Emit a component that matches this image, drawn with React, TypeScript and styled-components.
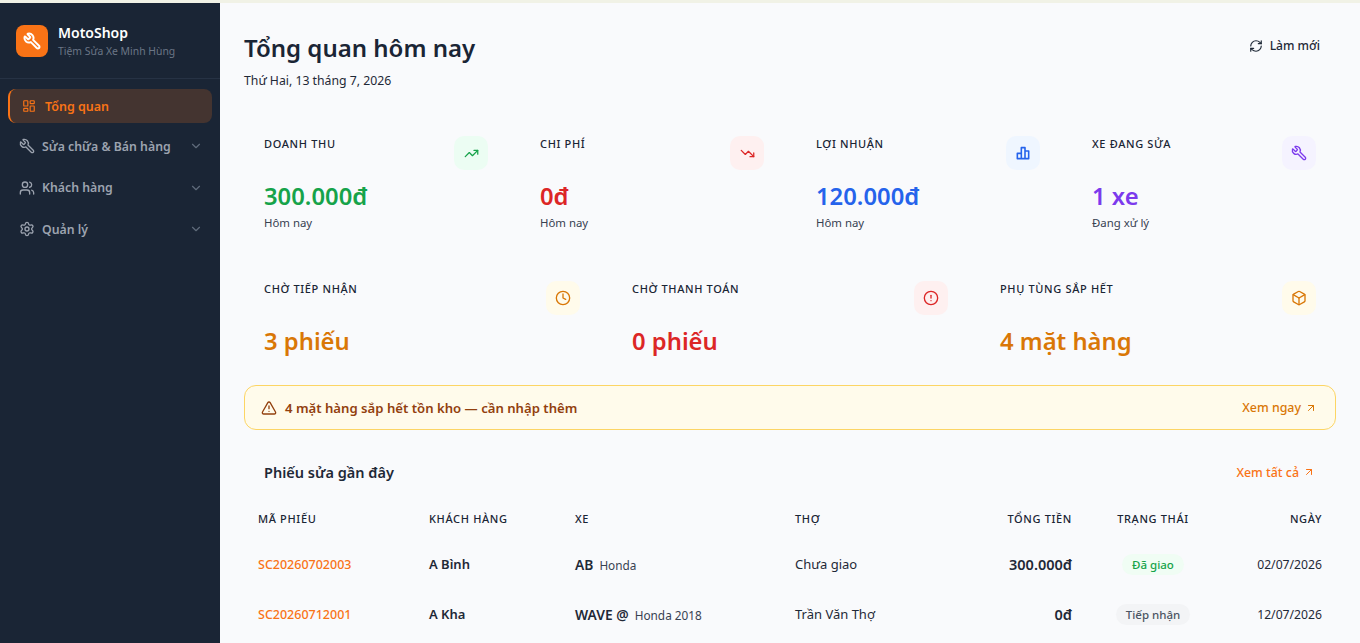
import { createGlobalStyle, styled } from "styled-components";
import {
	ArrowUpRight,
	Box,
	ChevronDown,
	CircleAlert,
	Clock,
	LayoutDashboard,
	RefreshCw,
	Settings,
	TrendingDown,
	TrendingUp,
	TriangleAlert,
	Users,
	Wrench,
} from "lucide-react";
import type { ReactNode } from "react";

const GlobalStyle = createGlobalStyle`
	html, body {
		margin: 0;
		height: 100%;
		overflow: hidden;
		background: #f9fafc;
		font-family: "Noto Sans", sans-serif;
	}
	* { box-sizing: border-box; }
`;

function BarsIcon() {
	return (
		<svg width="16" height="16" viewBox="0 0 24 24" fill="none" stroke="currentColor" strokeWidth="2.4" strokeLinejoin="round">
			<path d="M3.5 20.5v-8h6v8zM9.5 20.5V4h5.5v16.5zM15 20.5V9h5.5v11.5z" />
		</svg>
	);
}

const topStats = [
	{ label: "DOANH THU", value: "300.000đ", note: "Hôm nay", color: "#16a34a", tint: "#ecfdf3", icon: <TrendingUp size={15} /> },
	{ label: "CHI PHÍ", value: "0đ", note: "Hôm nay", color: "#dc2626", tint: "#fef0f0", icon: <TrendingDown size={15} /> },
	{ label: "LỢI NHUẬN", value: "120.000đ", note: "Hôm nay", color: "#2563eb", tint: "#eff6ff", icon: <BarsIcon /> },
	{ label: "XE ĐANG SỬA", value: "1 xe", note: "Đang xử lý", color: "#7c3aed", tint: "#f5f3ff", icon: <MirroredWrench size={16} /> },
];

const pendingStats = [
	{ label: "CHỜ TIẾP NHẬN", value: "3 phiếu", color: "#d97706", tint: "#fffbeb", icon: <Clock size={16} /> },
	{ label: "CHỜ THANH TOÁN", value: "0 phiếu", color: "#dc2626", tint: "#fef0f0", icon: <CircleAlert size={16} /> },
	{ label: "PHỤ TÙNG SẮP HẾT", value: "4 mặt hàng", color: "#d97706", tint: "#fffbeb", icon: <Box size={16} /> },
];

const orders = [
	{ code: "SC20260702003", customer: "A Bình", plate: "AB", bike: "Honda", mechanic: "Chưa giao", total: "300.000đ", status: "Đã giao", done: true, date: "02/07/2026" },
	{ code: "SC20260712001", customer: "A Kha", plate: "WAVE @", bike: "Honda 2018", mechanic: "Trần Văn Thợ", total: "0đ", status: "Tiếp nhận", done: false, date: "12/07/2026" },
];

function NavRow({ icon, label }: { icon: ReactNode; label: string }) {
	return (
		<NavItem>
			{icon}
			<NavLabel>{label}</NavLabel>
			<ChevronDown size={14} />
		</NavItem>
	);
}

function MirroredWrench({ size, stroke }: { size: number; stroke?: number }) {
	return (
		<Mirrored>
			<Wrench size={size} strokeWidth={stroke ?? 2} />
		</Mirrored>
	);
}

export default function App() {
	return (
		<>
			<GlobalStyle />
			<Page>
				<Sidebar>
					<Brand>
						<BrandLogo>
							<MirroredWrench size={18} stroke={2.6} />
						</BrandLogo>
						<div>
							<BrandName>MotoShop</BrandName>
							<BrandSub>Tiệm Sửa Xe Minh Hùng</BrandSub>
						</div>
					</Brand>
					<Nav>
						<ActiveItem>
							<LayoutDashboard size={14} />
							Tổng quan
						</ActiveItem>
						<NavRow icon={<MirroredWrench size={16} />} label="Sửa chữa & Bán hàng" />
						<NavRow icon={<Users size={16} />} label="Khách hàng" />
						<NavRow icon={<Settings size={16} />} label="Quản lý" />
					</Nav>
				</Sidebar>
				<Main>
					<Header>
						<div>
							<Title>Tổng quan hôm nay</Title>
							<DateLine>Thứ Hai, 13 tháng 7, 2026</DateLine>
						</div>
						<RefreshButton>
							<RefreshCw size={14} />
							Làm mới
						</RefreshButton>
					</Header>

					<TopGrid>
						{topStats.map((s) => (
							<StatCard key={s.label}>
								<StatText>
									<StatLabel>{s.label}</StatLabel>
									<StatValue $color={s.color}>{s.value}</StatValue>
									<StatNote>{s.note}</StatNote>
								</StatText>
								<StatIcon $color={s.color} $tint={s.tint}>{s.icon}</StatIcon>
							</StatCard>
						))}
					</TopGrid>

					<PendingGrid>
						{pendingStats.map((s) => (
							<StatCard key={s.label}>
								<StatText>
									<StatLabel>{s.label}</StatLabel>
									<StatValue $color={s.color}>{s.value}</StatValue>
								</StatText>
								<StatIcon $color={s.color} $tint={s.tint}>{s.icon}</StatIcon>
							</StatCard>
						))}
					</PendingGrid>

					<Banner>
						<BannerText>
							<TriangleAlert size={16} />
							4 mặt hàng sắp hết tồn kho — cần nhập thêm
						</BannerText>
						<BannerLink>
							Xem ngay
							<ArrowUpRight size={12} />
						</BannerLink>
					</Banner>

					<SectionHead>
						<SectionTitle>Phiếu sửa gần đây</SectionTitle>
						<SectionLink>
							Xem tất cả
							<ArrowUpRight size={12} />
						</SectionLink>
					</SectionHead>

					<Table>
						<colgroup>
							<col width={171} />
							<col width={146} />
							<col width={220} />
							<col width={195} />
							<col width={110} />
							<col width={134} />
							<col width={116} />
						</colgroup>
						<thead>
							<tr>
								<Th>MÃ PHIẾU</Th>
								<Th>KHÁCH HÀNG</Th>
								<Th>XE</Th>
								<Th>THỢ</Th>
								<Th $align="right">TỔNG TIỀN</Th>
								<Th $align="center">TRẠNG THÁI</Th>
								<Th $align="right">NGÀY</Th>
							</tr>
						</thead>
						<tbody>
							{orders.map((o) => (
								<tr key={o.code}>
									<Code>{o.code}</Code>
									<Customer>{o.customer}</Customer>
									<Td>
										<Plate>{o.plate}</Plate>
										<Bike>{o.bike}</Bike>
									</Td>
									<Td>{o.mechanic}</Td>
									<Total>{o.total}</Total>
									<Td $align="center">
										<Badge $done={o.done}>{o.status}</Badge>
									</Td>
									<DateCell>{o.date}</DateCell>
								</tr>
							))}
						</tbody>
					</Table>
				</Main>
			</Page>
		</>
	);
}

const Mirrored = styled.span`
	display: inline-flex;
	transform: scaleX(-1);
`;

const Page = styled.div`
	display: flex;
	height: 100vh;
	border-top: 3px solid #f1f2e6;
	overflow: hidden;
`;

const Sidebar = styled.aside`
	width: 220px;
	flex-shrink: 0;
	background: #1a2535;
`;

const Brand = styled.div`
	display: flex;
	align-items: center;
	gap: 10px;
	height: 76px;
	padding: 0 16px;
	border-bottom: 1px solid #263244;
`;

const BrandLogo = styled.div`
	width: 32px;
	height: 32px;
	border-radius: 8px;
	background: #f97316;
	color: #fff;
	display: flex;
	align-items: center;
	justify-content: center;
`;

const BrandName = styled.div`
	font-size: 14px;
	line-height: 19px;
	font-weight: 600;
	color: #fff;
`;

const BrandSub = styled.div`
	font-size: 10.4px;
	line-height: 15px;
	margin-top: 2px;
	color: #6b7686;
`;

const Nav = styled.nav`
	padding: 10px 8px;
	display: flex;
	flex-direction: column;
	gap: 3.4px;
`;

const ActiveItem = styled.div`
	display: flex;
	align-items: center;
	gap: 9px;
	height: 34px;
	margin-bottom: 1px;
	padding-left: 12px;
	border-radius: 8px;
	border-left: 2px solid #f97316;
	background: #443430;
	color: #f97316;
	font-size: 12.5px;
	font-weight: 600;
`;

const NavItem = styled.div`
	display: flex;
	align-items: center;
	gap: 7px;
	height: 38px;
	padding: 0 9px 0 11px;
	color: #9ca3af;
	font-size: 12.3px;
	font-weight: 600;

	> svg:last-child {
		color: #5f6b7b;
	}
`;

const NavLabel = styled.span`
	flex: 1;
`;

const Main = styled.main`
	flex: 1;
	min-width: 0;
	padding: 0 24px;
`;

const Header = styled.header`
	display: flex;
	align-items: flex-start;
	justify-content: space-between;
	padding-top: 27px;
	height: 113px;
`;

const Title = styled.h1`
	margin: 0;
	font-size: 24px;
	line-height: 36px;
	font-weight: 600;
	color: #1a2535;
`;

const DateLine = styled.p`
	margin: 6px 0 0;
	font-size: 12.25px;
	line-height: 18px;
	color: #1f2937;
`;

const RefreshButton = styled.div`
	display: flex;
	align-items: center;
	gap: 7px;
	margin: 7px 16px 0 0;
	font-size: 12.1px;
	line-height: 18px;
	font-weight: 500;
	color: #1f2937;
`;

const TopGrid = styled.section`
	display: grid;
	grid-template-columns: repeat(4, 1fr);
	gap: 12px;
`;

const PendingGrid = styled(TopGrid)`
	grid-template-columns: repeat(3, 1fr);
	margin: 10px 0 8px;
`;

const StatCard = styled.div`
	display: flex;
	justify-content: space-between;
	align-items: flex-start;
	padding: 20px;
`;

const StatText = styled.div`
	min-width: 0;
`;

const StatLabel = styled.div`
	font-size: 11px;
	line-height: 16px;
	font-weight: 500;
	letter-spacing: 0.65px;
	color: #1a2535;
`;

const StatValue = styled.div<{ $color: string }>`
	margin-top: 28px;
	font-size: 23.8px;
	line-height: 32px;
	font-weight: 600;
	color: ${(p) => p.$color};
`;

const StatNote = styled.div`
	margin-top: 2px;
	font-size: 11.4px;
	line-height: 17px;
	color: #374151;
`;

const StatIcon = styled.div<{ $color: string; $tint: string }>`
	width: 34px;
	height: 34px;
	flex-shrink: 0;
	border-radius: 10px;
	display: flex;
	align-items: center;
	justify-content: center;
	color: ${(p) => p.$color};
	background: ${(p) => p.$tint};
`;

const Banner = styled.div`
	display: flex;
	align-items: center;
	justify-content: space-between;
	height: 45px;
	padding: 0 18px 0 16px;
	border: 1px solid #fcd564;
	border-radius: 12px;
	background: #fffbeb;
`;

const BannerText = styled.div`
	display: flex;
	align-items: center;
	gap: 8px;
	font-size: 13.15px;
	font-weight: 600;
	color: #92400e;
`;

const BannerLink = styled.div`
	display: flex;
	align-items: center;
	gap: 4px;
	font-size: 12.4px;
	font-weight: 500;
	color: #d97706;
`;

const SectionHead = styled.div`
	display: flex;
	align-items: center;
	justify-content: space-between;
	height: 84px;
	padding: 0 21px 0 20px;
`;

const SectionTitle = styled.h2`
	margin: 0;
	font-size: 14.5px;
	font-weight: 600;
	color: #1f2937;
`;

const SectionLink = styled.div`
	display: flex;
	align-items: center;
	gap: 4px;
	font-size: 12.4px;
	font-weight: 500;
	color: #f97316;
`;

const Table = styled.table`
	width: 100%;
	table-layout: fixed;
	border-collapse: collapse;
	margin-top: -3px;
`;

const Th = styled.th<{ $align?: string }>`
	padding: 0 14px 12px;
	font-size: 11px;
	line-height: 16px;
	font-weight: 500;
	letter-spacing: 0.65px;
	color: #1a2535;
	text-align: ${(p) => p.$align ?? "left"};
`;

const Td = styled.td<{ $align?: string }>`
	height: 50px;
	padding: 0 14px;
	font-size: 13px;
	color: #1f2937;
	text-align: ${(p) => p.$align ?? "left"};
`;

const Code = styled(Td)`
	font-size: 12.5px;
	font-weight: 500;
	color: #f97316;
`;

const Customer = styled(Td)`
	font-weight: 600;
`;

const Plate = styled.span`
	font-size: 13.8px;
	font-weight: 600;
	margin-right: 6px;
`;

const Bike = styled.span`
	font-size: 11.8px;
	color: #374151;
`;

const Total = styled(Td)`
	font-weight: 600;
	font-size: 14.5px;
	text-align: right;
`;

const DateCell = styled(Td)`
	font-size: 12.2px;
	text-align: right;
`;

const Badge = styled.span<{ $done: boolean }>`
	display: inline-block;
	padding: 2px 10px;
	border-radius: 999px;
	font-size: 11.5px;
	line-height: 17px;
	font-weight: 500;
	color: ${(p) => (p.$done ? "#16a34a" : "#4b5563")};
	background: ${(p) => (p.$done ? "#f0fdf4" : "#f3f4f6")};
`;
